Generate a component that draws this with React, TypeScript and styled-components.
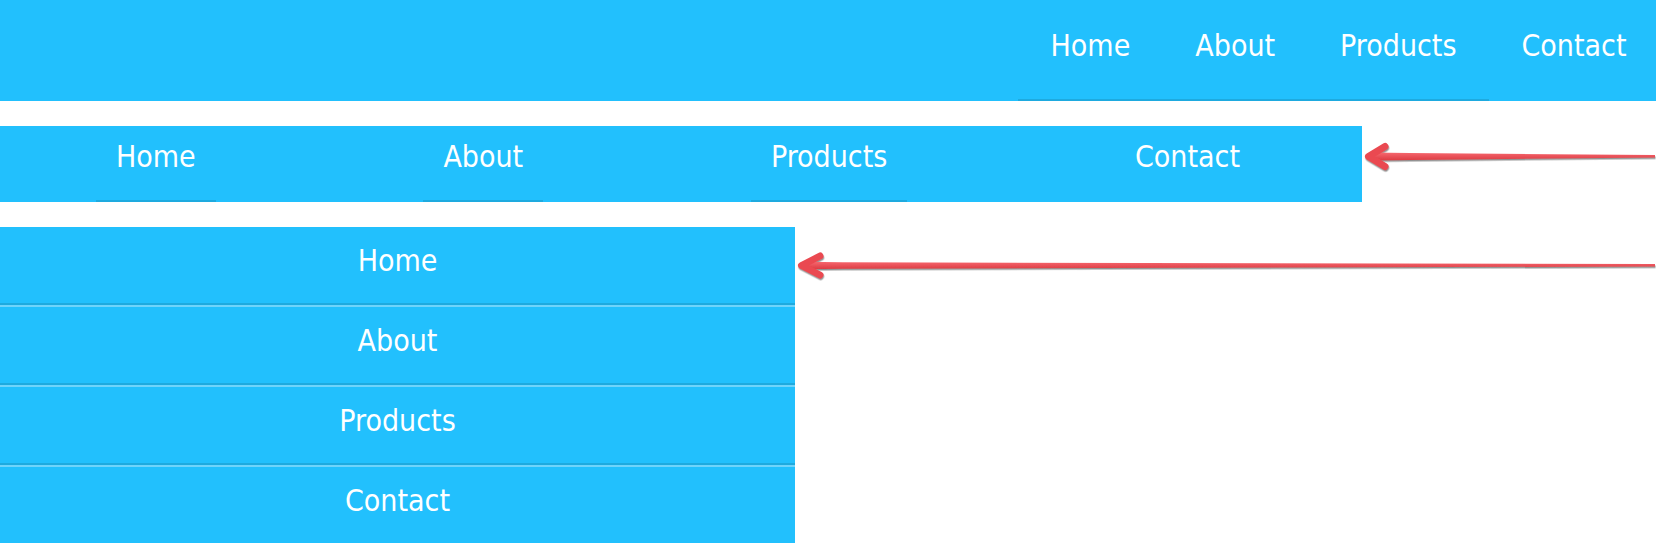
import React from "react";
import styled, { createGlobalStyle } from "styled-components";

const GlobalStyle = createGlobalStyle`
  html, body {
    margin: 0;
    padding: 0;
    background: #ffffff;
  }
  body {
    font-family: "DejaVu Sans Condensed", "DejaVu Sans", sans-serif;
    font-stretch: condensed;
  }
`;

const BLUE = "#22c0fd";
const DARK = "#1eaadf";
const LIGHT = "#6fd4fb";

const Page = styled.div`
  position: relative;
  display: flex;
  flex-direction: column;
  gap: 25px;
  width: 1659px;
`;

const NavBar = styled.nav<{ $width: number; $justify: string; $padLeft?: number; $padRight?: number }>`
  display: flex;
  justify-content: ${(p) => p.$justify};
  align-items: stretch;
  box-sizing: border-box;
  width: ${(p) => p.$width}px;
  padding: 0 ${(p) => p.$padRight ?? 0}px 0 ${(p) => p.$padLeft ?? 0}px;
  background: ${BLUE};
`;

const Menu = styled.div<{ $justify: string; $overhang: number }>`
  display: flex;
  flex: 1;
  justify-content: ${(p) => p.$justify};
  margin-right: ${(p) => -p.$overhang}px;
`;

const NavLink = styled.a<{ $padX: number; $padTop: number; $padBottom: number; $underline: boolean }>`
  display: block;
  padding: ${(p) => `${p.$padTop}px ${p.$padX}px ${p.$padBottom}px`};
  border-bottom: 2px solid ${(p) => (p.$underline ? DARK : "transparent")};
  color: #ffffff;
  font-size: 30px;
  line-height: 36px;
  text-decoration: none;
  white-space: nowrap;
`;

const VerticalList = styled.nav`
  display: flex;
  flex-direction: column;
  width: 795px;
  background: ${BLUE};
`;

const VerticalLink = styled.a<{ $first: boolean }>`
  display: block;
  padding: 16px 0 24px;
  border-top: 2px solid ${(p) => (p.$first ? "transparent" : LIGHT)};
  margin-top: ${(p) => (p.$first ? "-2px" : "0")};
  border-bottom: 2px solid ${DARK};
  color: #ffffff;
  font-size: 30px;
  line-height: 36px;
  text-align: center;
  text-decoration: none;
`;

const Overlay = styled.svg`
  position: absolute;
  left: 0;
  top: 0;
  pointer-events: none;
`;

const items = ["Home", "About", "Products", "Contact"];

type ArrowProps = {
  tipX: number;
  tipY: number;
  barbX: number;
  barbHalf: number;
  thick: number;
  tailX: number;
  tailY: number;
  tailThick: number;
};

const Arrow: React.FC<ArrowProps> = ({ tipX, tipY, barbX, barbHalf, thick, tailX, tailY, tailThick }) => {
  const shaftStart = tipX + 5;
  return (
    <g filter="url(#arrowShadow)">
      <polygon
        points={`${shaftStart},${tipY - thick / 2} ${shaftStart + 40},${tipY - thick / 2 + 0.6} ${tailX},${tailY - tailThick / 2} ${tailX},${tailY + tailThick / 2} ${shaftStart + 40},${tipY + thick / 2 - 0.6} ${shaftStart},${tipY + thick / 2}`}
        fill="url(#arrowRed)"
      />
      <polyline
        points={`${barbX},${tipY - barbHalf} ${tipX + 3.5},${tipY} ${barbX},${tipY + barbHalf}`}
        fill="none"
        stroke="#ea4a51"
        strokeWidth={7}
        strokeLinecap="round"
        strokeLinejoin="round"
      />
    </g>
  );
};

export default function App() {
  return (
    <>
      <GlobalStyle />
      <Page>
        <NavBar $width={1656} $justify="flex-end">
          <Menu $justify="flex-end" $overhang={3}>
            {items.map((t, i) => (
              <NavLink
                key={t}
                href="#"
                $padX={32.5}
                $padTop={28}
                $padBottom={35}
                $underline={i < 3}
              >
                {t}
              </NavLink>
            ))}
          </Menu>
        </NavBar>
        <NavBar $width={1362} $justify="space-between" $padLeft={96} $padRight={102}>
          {items.map((t, i) => (
            <NavLink
              key={t}
              href="#"
              $padX={20}
              $padTop={13}
              $padBottom={25}
              $underline={i < 3}
            >
              {t}
            </NavLink>
          ))}
        </NavBar>
        <VerticalList>
          {items.map((t, i) => (
            <VerticalLink key={t} href="#" $first={i === 0}>
              {t}
            </VerticalLink>
          ))}
        </VerticalList>
        <Overlay width={1659} height={543} viewBox="0 0 1659 543">
          <defs>
            <linearGradient id="arrowRed" x1="0" y1="0" x2="0" y2="1">
              <stop offset="0" stopColor="#f6686f" />
              <stop offset="1" stopColor="#dc3a41" />
            </linearGradient>
            <filter id="arrowShadow" x="-5%" y="-60%" width="110%" height="220%">
              <feDropShadow dx="0.5" dy="1.5" stdDeviation="0.7" floodColor="#555555" floodOpacity="0.65" />
            </filter>
          </defs>
          <Arrow tipX={1365} tipY={156.5} barbX={1385} barbHalf={10} thick={8} tailX={1655} tailY={156.3} tailThick={2.5} />
          <Arrow tipX={798} tipY={265.5} barbX={820} barbHalf={9.5} thick={7.5} tailX={1655} tailY={265.3} tailThick={2.5} />
        </Overlay>
      </Page>
    </>
  );
}
